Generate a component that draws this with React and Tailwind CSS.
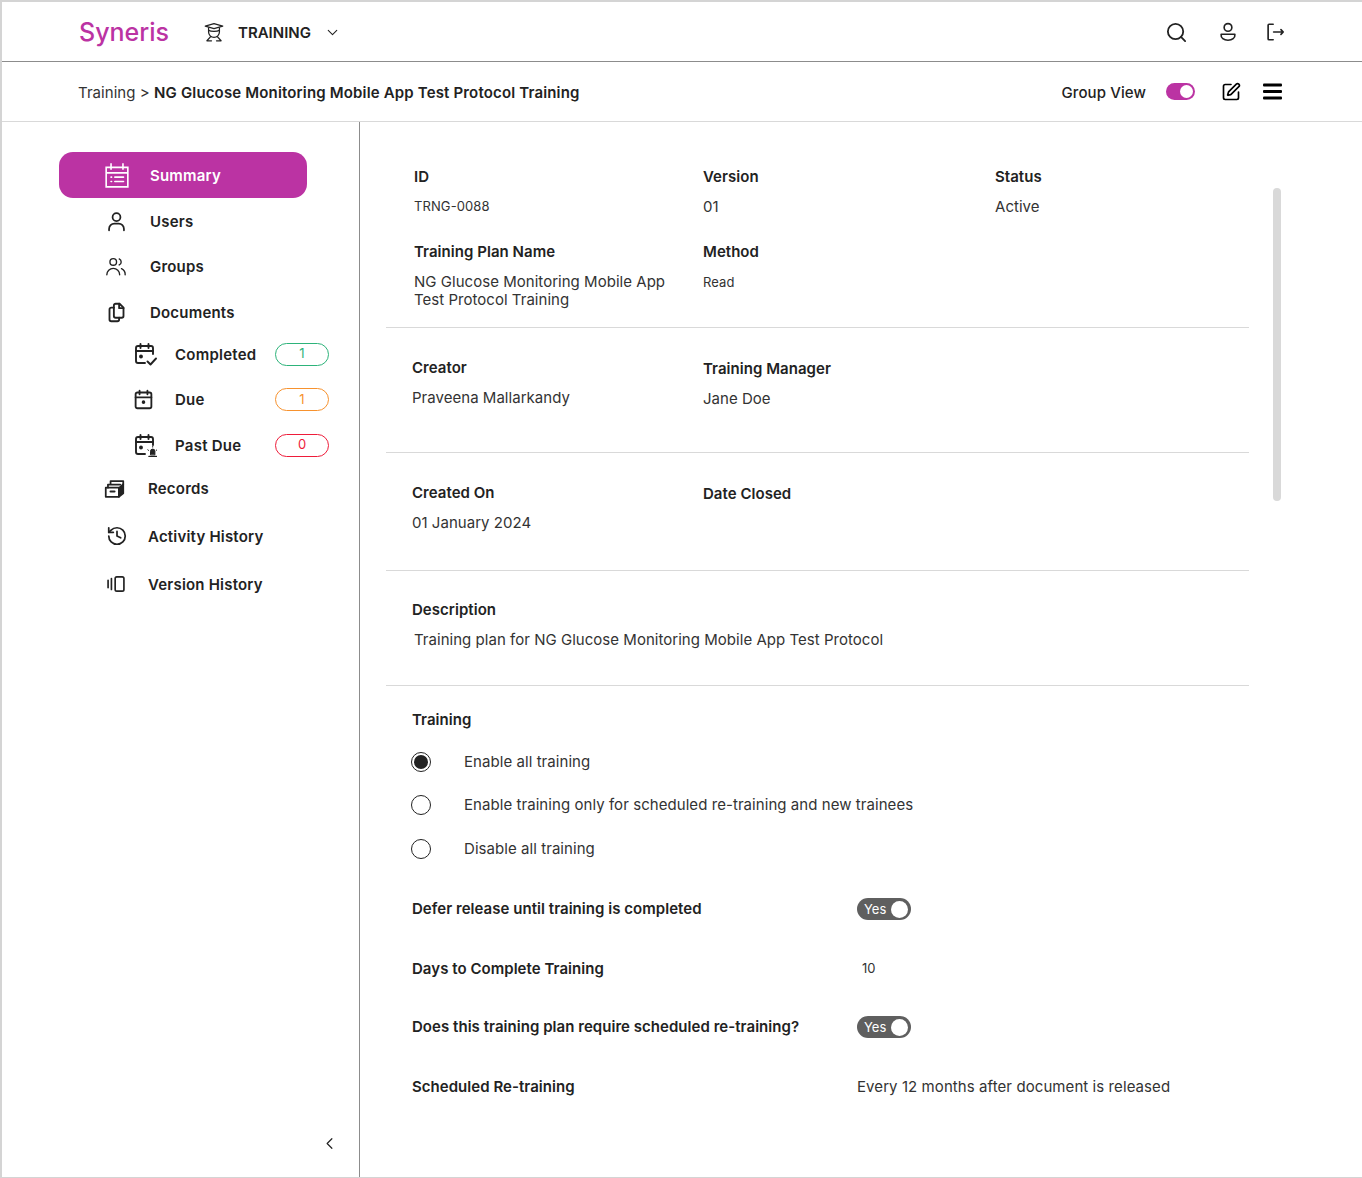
import { ChevronDown, ChevronLeft, History, Search, SquarePen } from "lucide-react";

const Svg = ({ size = 24, children, stroke = "#222222", sw = 1.6 }) => (
  <svg width={size} height={size} viewBox="0 0 24 24" fill="none" stroke={stroke} strokeWidth={sw} strokeLinecap="round" strokeLinejoin="round">
    {children}
  </svg>
);

const GradIcon = () => (
  <Svg size={20} sw={1.5}>
    <path d="M1.500 5 12 2l10.500 3L12 8z" />
    <path d="M5.500 7v5a6.500 6.500 0 0 0 13 0V7" />
    <path d="M5.500 10c3 1.500 10 1.500 13 0" />
    <path d="M8 17.500 3.500 22.500H9M16 17.500l4.500 5H15" />
  </Svg>
);

const AccountIcon = () => (
  <Svg size={22} sw={1.8}>
    <circle cx="12" cy="7" r="4.200" />
    <path d="M4.500 14.500h15c.5 4-3 6.500-7.500 6.500s-8-2.500-7.500-6.500z" />
  </Svg>
);

const LogoutIcon = () => (
  <Svg size={22} sw={1.8}>
    <path d="M10 3.500H5.500a1 1 0 0 0-1 1v15a1 1 0 0 0 1 1H10" />
    <path d="M10.500 12H21M18.500 9.500 21 12l-2.500 2.500" />
  </Svg>
);

const MenuIcon = () => (
  <svg width="19" height="17" viewBox="0 0 19 17" fill="#000000">
    <rect x="0" y="0.500" width="19" height="3" rx="1" />
    <rect x="0" y="7" width="19" height="3" rx="1" />
    <rect x="0" y="13.500" width="19" height="3" rx="1" />
  </svg>
);

const SummaryIcon = () => (
  <Svg size={26} stroke="#ffffff" sw={1.500}>
    <path d="M2 5h20v18H2zM2 10h20M6.500 2v4.500M17.500 2v4.500" strokeLinecap="square" strokeLinejoin="miter" />
    <path d="M6.500 14h.5M10 14h8M6.500 18h.5M10 18h8" />
  </Svg>
);

const UserIcon = () => (
  <Svg size={21} sw={2}>
    <circle cx="12" cy="7" r="4.500" />
    <path d="M3.500 22v-1.500a6 6 0 0 1 6-6h5a6 6 0 0 1 6 6V22" />
  </Svg>
);

const GroupIcon = () => (
  <Svg size={22} sw={1.500}>
    <circle cx="9" cy="6.500" r="3.600" />
    <path d="M15.500 3.200a3.600 3.600 0 0 1 0 6.600" />
    <path d="M2 20.500a7 7 0 0 1 14 0" />
    <path d="M18 13.800a7 7 0 0 1 4 6.700" />
  </Svg>
);

const DocsIcon = () => (
  <Svg size={21} sw={2.100}>
    <path d="M9 6.500H6a2 2 0 0 0-2 2V20a2 2 0 0 0 2 2h7a2 2 0 0 0 2-2v-2" />
    <path d="M9 4a2 2 0 0 1 2-2h4.500L20 6.500V16a2 2 0 0 1-2 2h-7a2 2 0 0 1-2-2z" />
    <path d="M15 2v5h5" />
  </Svg>
);

const CalendarBase = ({ cut }) => (
  <>
    <path d={cut ? "M12 21H5a2 2 0 0 1-2-2V6a2 2 0 0 1 2-2h13a2 2 0 0 1 2 2v6" : "M5 4h14a2 2 0 0 1 2 2v14a2 2 0 0 1-2 2H5a2 2 0 0 1-2-2V6a2 2 0 0 1 2-2z"} />
    <path d={cut ? "M3 9h17M7.500 2v4M15.500 2v4" : "M3 9.500h18M7.500 2v4M16.500 2v4"} />
    <circle cx={cut ? 8 : 12} cy={cut ? 14.500 : 15} r="1" fill="#222222" />
  </>
);

const CompletedIcon = () => (
  <Svg size={24} sw={1.900}>
    <CalendarBase cut />
    <path d="m14.500 19.500 3 3 5.500-6" />
  </Svg>
);

const DueIcon = () => (
  <Svg size={21} sw={2.100}>
    <CalendarBase />
  </Svg>
);

const PastDueIcon = () => (
  <Svg size={24} sw={1.900}>
    <CalendarBase cut />
    <path d="M16 23.500h7.500" strokeWidth="1.500" />
    <path d="M17.500 21.500v-3.200a2.200 2.200 0 0 1 4.400 0v3.200z" fill="#222222" strokeWidth="1" />
    <path d="M14.800 16.800l.8.6M24 16.800l-.8.6M19.700 13.500v.6" strokeWidth="1" />
  </Svg>
);

const RecordsIcon = () => (
  <Svg size={21} sw={2}>
    <path d="M2 11h15v10.500H2z" />
    <path d="M17 11.500 22 7v10.500l-5 4z" fill="#222222" />
    <path d="M4.500 11V7.500h14M7.500 7V3.500h14.500V7" />
    <path d="M7.500 15.500h4.500" strokeWidth="2.400" />
  </Svg>
);

const VersionIcon = () => (
  <Svg size={20} sw={2}>
    <rect x="11" y="3.500" width="10.500" height="17" rx="2" />
    <path d="M2.500 7.500v9M6.500 5.500v13" />
  </Svg>
);

const NavItem = ({ icon, label, className, iconBox }) => (
  <div className={`flex items-center ${className}`}>
    <div className={`flex items-center ${iconBox}`}>{icon}</div>
    <span className="pt-[2px] text-[15px] font-semibold tracking-[0.2px] text-[#222222]">{label}</span>
  </div>
);

const SubItem = ({ icon, label, count, color, className }) => (
  <div className={`flex items-center ${className}`}>
    <div className="flex w-[116px] items-center pl-[74px]">{icon}</div>
    <span className="w-[100px] pt-[2px] text-[15px] font-semibold tracking-[0.25px] text-[#222222]">{label}</span>
    <span className={`flex h-[23px] w-[54px] items-center justify-center rounded-full border text-[13px] ${color}`}>{count}</span>
  </div>
);

const Label = ({ children, className = "" }) => (
  <div className={`text-[15px] leading-[18px] font-semibold tracking-[0.04px] text-[#222222] ${className}`}>{children}</div>
);

const Value = ({ children, className = "" }) => (
  <div className={`text-[15px] leading-[18px] tracking-[0.03px] text-[#333333] ${className}`}>{children}</div>
);

const Small = ({ children, className = "" }) => (
  <div className={`text-[13px] leading-[18px] tracking-[0.1px] text-[#333333] ${className}`}>{children}</div>
);

const Radio = ({ checked, label, className }) => (
  <div className={`flex items-center ${className}`}>
    <span className="flex h-5 w-5 items-center justify-center rounded-full border border-[#222222]">
      {checked && <span className="h-[14px] w-[14px] rounded-full bg-[#222222]" />}
    </span>
    <span className="ml-[33px] text-[15px] leading-[18px] tracking-[0.06px] text-[#333333]">{label}</span>
  </div>
);

const YesToggle = () => (
  <div className="flex h-[22px] w-[54px] items-center justify-between rounded-full bg-[#5f5f5f] pr-[3px] pl-[7px] text-[13px] text-white">
    <span className="pt-px">Yes</span>
    <span className="h-[17px] w-[17px] rounded-full bg-white" />
  </div>
);

const SettingRow = ({ label, children, className }) => (
  <div className={`flex items-center ${className}`}>
    <Label className="w-[445px]">{label}</Label>
    {children}
  </div>
);

export default function App() {
  return (
    <div className="flex h-[1178px] w-[1362px] flex-col overflow-hidden border-t-2 border-b border-l-2 border-[#d4d4d4] bg-white font-['Inter',sans-serif] text-[#222222]">
      {/* top bar */}
      <header className="flex h-[60px] shrink-0 items-center border-b-[1.5px] border-[#8c8c8c] pr-[76px] pl-[77px]">
        <span className="mt-[2px] w-[125px] text-[25px] font-medium text-[#bb33a3]">Syneris</span>
        <GradIcon />
        <span className="mt-[3px] ml-[14px] text-[15px] font-semibold">TRAINING</span>
        <ChevronDown size={17} strokeWidth={1.500} className="mt-px ml-[13px]" />
        <div className="mt-px ml-auto flex items-center">
          <Search size={23} strokeWidth={1.900} />
          <span className="ml-[29px]">
            <AccountIcon />
          </span>
          <span className="ml-[25px]">
            <LogoutIcon />
          </span>
        </div>
      </header>

      {/* breadcrumb bar */}
      <div className="flex h-[60px] shrink-0 items-center border-b border-[#d9d9d9] pr-[80px] pl-[76px]">
        <span className="mt-[3px] text-[15px] tracking-[0.05px] text-[#333333]">Training &gt;&nbsp;</span>
        <span className="mt-[3px] text-[15px] font-semibold tracking-[0.16px]">NG Glucose Monitoring Mobile App Test Protocol Training</span>
        <span className="mt-[3px] ml-auto text-[15px] font-medium tracking-[0.1px]">Group View</span>
        <div className="ml-[20px] flex h-[17px] w-[29px] items-center justify-end rounded-full bg-[#bb33a3] pr-[2px]">
          <span className="h-[13px] w-[13px] rounded-full bg-white" />
        </div>
        <SquarePen size={20} strokeWidth={2} color="#000000" className="ml-[26px]" />
        <div className="ml-[22px]">
          <MenuIcon />
        </div>
      </div>

      <div className="flex min-h-0 flex-1">
        {/* sidebar */}
        <aside className="relative w-[358px] shrink-0 border-r-[1.5px] border-[#8c8c8c] pt-[30px]">
          <div className="ml-[57px] flex h-[46px] w-[248px] items-center rounded-[14px] bg-[#bb33a3] pl-[45px]">
            <SummaryIcon />
            <span className="ml-[20px] pt-[2px] text-[15px] font-semibold tracking-[0.2px] text-white">Summary</span>
          </div>
          <NavItem icon={<UserIcon />} label="Users" className="h-[46px] pl-[58px]" iconBox="w-[90px] pl-[46px]" />
          <NavItem icon={<GroupIcon />} label="Groups" className="h-[45px] pl-[58px]" iconBox="w-[90px] pl-[45px]" />
          <NavItem icon={<DocsIcon />} label="Documents" className="h-[46px] pl-[58px]" iconBox="w-[90px] pl-[46px]" />
          <SubItem icon={<CompletedIcon />} label="Completed" count="1" color="border-[#2db37a] text-[#2db37a]" className="mt-[-4px] h-[46px] pl-[57px]" />
          <SubItem icon={<DueIcon />} label="Due" count="1" color="border-[#f7922e] text-[#f7922e]" className="h-[45px] pl-[57px]" />
          <SubItem icon={<PastDueIcon />} label="Past Due" count="0" color="border-[#ee1c3a] text-[#ee1c3a]" className="h-[46px] pl-[57px]" />
          <NavItem icon={<RecordsIcon />} label="Records" className="h-[40px] pl-[57px]" iconBox="w-[89px] pl-[45px]" />
          <NavItem icon={<History size={22} strokeWidth={1.900} />} label="Activity History" className="mt-[4px] h-[48px] pl-[57px]" iconBox="w-[89px] pl-[47px]" />
          <NavItem icon={<VersionIcon />} label="Version History" className="h-[48px] pl-[57px]" iconBox="w-[89px] pl-[47px]" />
          <ChevronLeft size={19} strokeWidth={1.500} className="absolute top-[1012px] left-[318px]" />
        </aside>

        {/* main content */}
        <main className="relative min-w-0 flex-1 pl-[26px]">
          <div className="w-[863px]">
            <section className="grid h-[206px] grid-cols-[289px_292px_1fr] border-b border-[#d9d9d9] pt-[46px] pl-[28px]">
              <div>
                <Label>ID</Label>
                <Small className="mt-[11px]">TRNG-0088</Small>
                <Label className="mt-[28px]">Training Plan Name</Label>
                <Value className="mt-[12px]">
                  NG Glucose Monitoring Mobile App
                  <br />
                  Test Protocol Training
                </Value>
              </div>
              <div>
                <Label>Version</Label>
                <Value className="mt-[12px]">01</Value>
                <Label className="mt-[27px]">Method</Label>
                <Small className="mt-[12px]">Read</Small>
              </div>
              <div>
                <Label>Status</Label>
                <Value className="mt-[12px]">Active</Value>
              </div>
            </section>

            <section className="grid h-[125px] grid-cols-[291px_1fr] border-b border-[#d9d9d9] pt-[31px] pl-[26px]">
              <div>
                <Label>Creator</Label>
                <Value className="mt-[12px]">Praveena Mallarkandy</Value>
              </div>
              <div className="pt-px">
                <Label>Training Manager</Label>
                <Value className="mt-[12px]">Jane Doe</Value>
              </div>
            </section>

            <section className="grid h-[118px] grid-cols-[291px_1fr] border-b border-[#d9d9d9] pt-[31px] pl-[26px]">
              <div>
                <Label>Created On</Label>
                <Value className="mt-[12px]">01 January 2024</Value>
              </div>
              <div className="pt-px">
                <Label>Date Closed</Label>
              </div>
            </section>

            <section className="h-[115px] border-b border-[#d9d9d9] pt-[30px] pl-[26px]">
              <Label>Description</Label>
              <Value className="mt-[12px] pl-[2px]">Training plan for NG Glucose Monitoring Mobile App Test Protocol</Value>
            </section>

            <section className="pt-[25px] pl-[26px]">
              <Label>Training</Label>
              <Radio checked label="Enable all training" className="mt-[23px] ml-[-1px] h-5" />
              <Radio label="Enable training only for scheduled re-training and new trainees" className="mt-[23px] ml-[-1px] h-5" />
              <Radio label="Disable all training" className="mt-[24px] ml-[-1px] h-5" />
              <SettingRow label="Defer release until training is completed" className="mt-[39px] h-[22px]">
                <YesToggle />
              </SettingRow>
              <SettingRow label="Days to Complete Training" className="mt-[38px] h-[22px]">
                <span className="pl-[5px] text-[13px] text-[#333333]">10</span>
              </SettingRow>
              <SettingRow label="Does this training plan require scheduled re-training?" className="mt-[36px] h-[22px]">
                <YesToggle />
              </SettingRow>
              <SettingRow label="Scheduled Re-training" className="mt-[38px] h-[22px]">
                <Value>
                  <span className="tracking-[0.08px]">Every 12 months after document is released</span>
                </Value>
              </SettingRow>
            </section>
          </div>
          {/* scrollbar thumb */}
          <div className="absolute top-[66px] left-[913px] h-[313px] w-2 rounded-full bg-[#d9d9d9]" />
        </main>
      </div>
    </div>
  );
}
